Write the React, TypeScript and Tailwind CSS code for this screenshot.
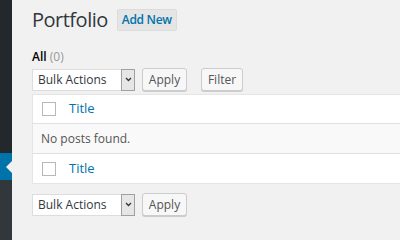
import React from 'react'

const font = { fontFamily: '"Open Sans", "Noto Sans", sans-serif' }

function BulkSelect() {
  return (
    <div className="flex h-[22px] w-[103px] items-center justify-between border border-[#dddddd] bg-white">
      <span className="pl-[5px] text-[12px] leading-none text-[#32373c]">Bulk Actions</span>
      <span className="flex h-[22px] w-[14px] items-center justify-center border border-[#a0a0a0] bg-[#e6e6e6] -mr-px">
        <svg width="7" height="5" viewBox="0 0 7 5">
          <path d="M1 1 L3.5 3.5 L6 1" fill="none" stroke="#333" strokeWidth="1.3" />
        </svg>
      </span>
    </div>
  )
}

function Btn({ label, className }: { label: string; className?: string }) {
  return (
    <span
      className={`flex h-[23px] items-center justify-center rounded-[3px] border border-[#cccccc] bg-[#f7f7f7] text-[12px] text-[#555555] shadow-[0_1px_0_#cccccc] ${className || ''}`}
    >
      {label}
    </span>
  )
}

function Checkbox() {
  return <span className="block h-[14px] w-[14px] border border-[#b4b9be] bg-white" />
}

function TitleRow({ className }: { className?: string }) {
  return (
    <div className={`flex h-[29px] items-center pl-[9px] ${className || ''}`}>
      <Checkbox />
      <span className="ml-[13px] text-[13px] text-[#0073aa]">Title</span>
    </div>
  )
}

export default function App() {
  return (
    <div className="flex h-[240px] w-[400px] overflow-hidden bg-[#f1f1f1]" style={font}>
      {/* admin menu strip */}
      <div className="flex h-full w-[12px] shrink-0 flex-col">
        <div className="h-[153px] bg-[#23282d]" />
        <div className="relative h-[27px] bg-[#0073aa]">
          <span className="absolute right-0 top-[8px] h-0 w-0 border-y-[6px] border-r-[6px] border-y-transparent border-r-[#f1f1f1]" />
        </div>
        <div className="flex-1 bg-[#32373c]" />
      </div>

      <div className="min-w-0 flex-1 pl-[20px] pt-[9px]">
        <div className="flex h-[22px] items-center">
          <h1 className="text-[20px] leading-[22px] tracking-[-0.5px] text-[#32373c]">Portfolio</h1>
          <span className="ml-[9px] flex h-[22px] w-[60px] items-center justify-center rounded-[2px] border border-[#dcdcdc] bg-[#e5e5e5] text-[12px] font-semibold tracking-[-0.3px] text-[#0073aa]">
            Add New
          </span>
        </div>

        <div className="mt-[18px] text-[12px] leading-[16px]">
          <span className="font-semibold text-[#000]">All</span>{' '}
          <span className="text-[#999999]">(0)</span>
        </div>

        <div className="mt-[3px] flex items-center">
          <BulkSelect />
          <Btn label="Apply" className="ml-[7px] w-[45px]" />
          <Btn label="Filter" className="ml-[14px] w-[42px]" />
        </div>

        <div className="mt-[3px] -mr-[10px] border border-[#e5e5e5] bg-white">
          <TitleRow className="border-b border-[#e1e1e1]" />
          <div className="flex h-[30px] items-center border-b border-[#e1e1e1] bg-[#f9f9f9] pl-[8px] text-[12px] text-[#555555]">
            No posts found.
          </div>
          <TitleRow />
        </div>

        <div className="mt-[9px] flex items-center">
          <BulkSelect />
          <Btn label="Apply" className="ml-[7px] w-[45px]" />
        </div>
      </div>
    </div>
  )
}
